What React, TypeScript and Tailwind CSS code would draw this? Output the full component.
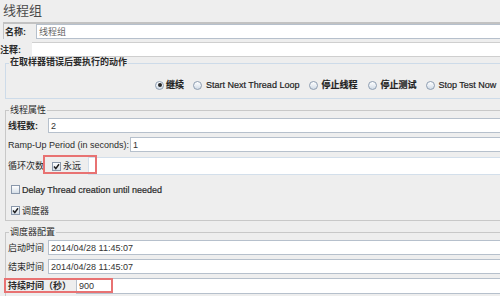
import React from "react";

function Radio({ checked }: { checked?: boolean }) {
  return (
    <span className="flex h-[9px] w-[9px] shrink-0 items-center justify-center rounded-full border border-[#8d9db1] bg-linear-to-b from-white to-[#d2dce7]">
      {checked && <span className="h-[4px] w-[4px] rounded-full bg-[#262626]" />}
    </span>
  );
}

function Check({ checked }: { checked?: boolean }) {
  return (
    <span className="flex h-[9px] w-[9px] shrink-0 items-center justify-center border border-[#8a98ab] bg-linear-to-b from-white to-[#d6dfe8]">
      {checked && (
        <svg width="7" height="7" viewBox="0 0 7 7">
          <path d="M1 3.6 L2.8 5.6 L6 1.2" fill="none" stroke="#1e1e1e" strokeWidth="1.5" />
        </svg>
      )}
    </span>
  );
}

function Field({ value, light }: { value?: string; light?: boolean }) {
  return (
    <div
      className={
        light
          ? "flex h-full flex-1 items-center border-y border-l border-[#d3dfeb] bg-white pl-[2px] text-[#333]"
          : "flex h-full flex-1 items-center border-y border-l border-[#b6c0cc] bg-white pl-[2px] text-[#333]"
      }
    >
      {value}
    </div>
  );
}

export default function App() {
  return (
    <div className="h-[296px] w-[500px] overflow-hidden bg-[#eeeeee] font-['Liberation_Sans','Noto_Sans_CJK_SC',sans-serif] text-[9px] leading-[10px] text-[#2b2b2b]">
      <div className="h-[22px] pl-[3px] pt-[3px] text-[13px] leading-[16px] text-[#4a4a4a]">线程组</div>

      <div className="ml-[3px] border-l border-t-2 border-[#c2c2c2]">
        <div className="flex h-[15px] items-center">
          <span className="w-[32px] pl-[1px] font-semibold">名称:</span>
          <div className="flex h-full flex-1 items-center border-y border-l border-[#b6c0cc] bg-white pl-[2px] text-[#666]">线程组</div>
        </div>
      </div>

      <div className="mt-[3px] flex h-[15px] items-center">
        <span className="w-[32px] font-semibold">注释:</span>
        <div className="h-full flex-1 border-y border-[#cfcfcf] bg-white" />
      </div>

      <div className="relative ml-[5px] mt-[6px] h-[36px] border border-r-0 border-[#cddbe9]">
        <span className="absolute left-[3px] top-[-7px] bg-[#eeeeee] px-[1px] font-semibold">在取样器错误后要执行的动作</span>
        <div className="mt-[16px] flex h-[10px] items-center pl-[149px] text-[#222] [-webkit-text-stroke:0.2px]">
          <Radio checked />
          <span className="ml-[2px] font-semibold">继续</span>
          <span className="ml-[9px]"><Radio /></span>
          <span className="ml-[4px]">Start Next Thread Loop</span>
          <span className="ml-[10px]"><Radio /></span>
          <span className="ml-[3px] font-semibold">停止线程</span>
          <span className="ml-[11px]"><Radio /></span>
          <span className="ml-[3px] font-semibold">停止测试</span>
          <span className="ml-[10px]"><Radio /></span>
          <span className="ml-[3px]">Stop Test Now</span>
        </div>
      </div>

      <div className="relative ml-[5px] mt-[11px] h-[111px] border border-r-0 border-[#c8c8c8]">
        <span className="absolute left-[3px] top-[-6px] bg-[#eeeeee] px-[1px]">线程属性</span>
        <div className="mt-[7px] flex h-[15px] items-center">
          <span className="w-[42px] pl-[2px] font-semibold">线程数:</span>
          <Field value="2" />
        </div>
        <div className="mt-[4px] flex h-[15px] items-center">
          <span className="w-[124px] pl-[2px]">Ramp-Up Period (in seconds):</span>
          <Field value="1" />
        </div>
        <div className="relative mt-[5px] flex h-[18px] items-center">
          <span className="w-[40px] pl-[2px]">循环次数</span>
          <div className="flex w-[42px] items-center">
            <span className="ml-[6px]"><Check checked /></span>
            <span className="ml-[2px]">永远</span>
          </div>
          <Field light />
          <div className="absolute left-[37px] top-[-2px] h-[19px] w-[54px] border-2 border-[#e87272]" />
        </div>
        <div className="mt-[10px] flex h-[9px] items-center">
          <span className="ml-[5px]"><Check /></span>
          <span className="ml-[2px] [-webkit-text-stroke:0.2px]">Delay Thread creation until needed</span>
        </div>
        <div className="mt-[12px] flex h-[9px] items-center">
          <span className="ml-[5px]"><Check checked /></span>
          <span className="ml-[2px]">调度器</span>
        </div>
      </div>

      <div className="relative ml-[5px] mt-[11px] h-[80px] border border-r-0 border-[#c8c8c8]">
        <span className="absolute left-[3px] top-[-6px] bg-[#eeeeee] px-[1px]">调度器配置</span>
        <div className="mt-[7px] flex h-[15px] items-center">
          <span className="w-[42px] pl-[2px]">启动时间</span>
          <Field value="2014/04/28 11:45:07" />
        </div>
        <div className="mt-[4px] flex h-[15px] items-center">
          <span className="w-[42px] pl-[2px]">结束时间</span>
          <Field value="2014/04/28 11:45:07" />
        </div>
        <div className="relative mt-[4px] flex h-[16px] items-center">
          <span className="w-[70px] pl-[2px] font-semibold">持续时间（秒）</span>
          <Field value="900" />
          <div className="absolute left-[-2px] top-0 h-[15px] w-[109px] border-2 border-[#e87272]" />
        </div>
      </div>
    </div>
  );
}
